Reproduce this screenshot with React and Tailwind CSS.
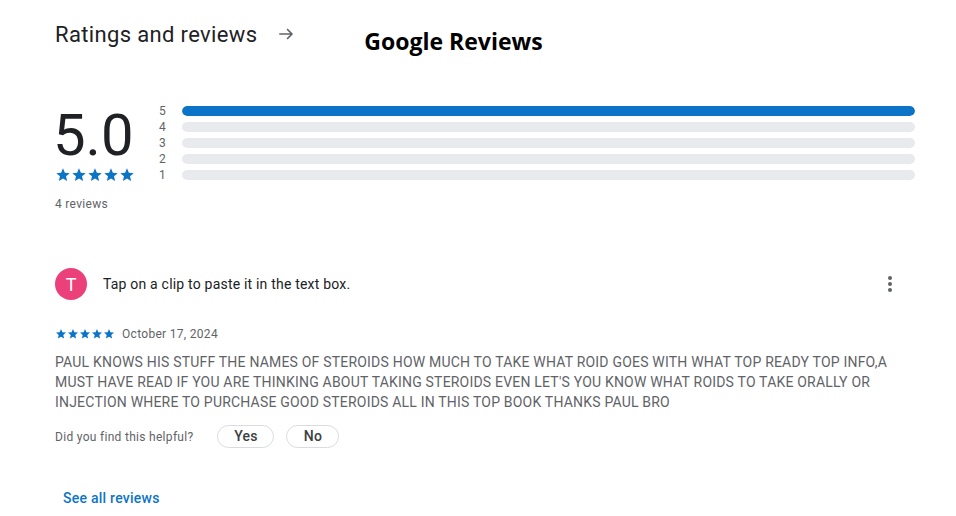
import React from "react";

const Star = ({ size = 14 }) => (
  <svg width={size} height={size} viewBox="0 0 24 24" fill="#0b74c7">
    <path d="M12 17.27L18.18 21l-1.64-7.03L22 9.24l-7.19-.61L12 2 9.19 8.63 2 9.24l5.46 4.73L5.82 21z" />
  </svg>
);

const Stars = ({ size, gap }) => (
  <div className={`flex ${gap}`}>
    {[0, 1, 2, 3, 4].map((i) => (
      <Star key={i} size={size} />
    ))}
  </div>
);

export default function App() {
  const rows = [5, 4, 3, 2, 1];
  return (
    <div className="w-[956px] h-[516px] bg-white overflow-hidden relative" style={{ fontFamily: "Roboto, sans-serif" }}>
      {/* header */}
      <div className="flex items-center pl-[55px] pt-[18px] h-[50px]">
        <span className="text-[22px] text-[#202124] tracking-[0.35px]">Ratings and reviews</span>
        <svg className="ml-[20px]" width="18" height="18" viewBox="0 0 24 24" fill="none" stroke="#5f6368" strokeWidth="2">
          <path d="M3 12h17M13.5 5.5l6.5 6.5-6.5 6.5" />
        </svg>
        <span className="ml-[69px] mt-[14px] text-[23px] font-bold text-black" style={{ fontFamily: "'Open Sans', sans-serif" }}>
          Google Reviews
        </span>
      </div>

      {/* summary */}
      <div className="flex pl-[55px] pr-[41px] mt-[53px]">
        <div className="w-[100px] flex flex-col">
          <div className="text-[58px] leading-[50px] text-[#202124] -ml-[2px] mt-[7px]">5.0</div>
          <div className="mt-[7px] ml-0">
            <Stars size={16} gap="gap-0" />
          </div>
          <div className="mt-[12px] text-[12px] text-[#5f6368] tracking-[0.3px]">4 reviews</div>
        </div>
        <div className="flex-1 flex flex-col ml-[4px] gap-[6px] mt-[3px]">
          {rows.map((r) => (
            <div key={r} className="flex items-center h-[10px]">
              <span className="w-[23px] text-[12px] text-[#5f6368] leading-none">{r}</span>
              <div className="flex-1 h-[10px] rounded-full bg-[#e8eaed] overflow-hidden">
                {r === 5 && <div className="h-full w-full rounded-full bg-[#0b74c7]" />}
              </div>
            </div>
          ))}
        </div>
      </div>

      {/* review */}
      <div className="pl-[55px] pr-[41px] mt-[55px]">
        <div className="flex items-center">
          <div className="w-[32px] h-[32px] rounded-full bg-[#ec407a] flex items-center justify-center text-white text-[18px]">T</div>
          <span className="ml-[16px] text-[14px] text-[#202124] tracking-[0.2px]">Tap on a clip to paste it in the text box.</span>
          <div className="flex-1" />
          <div className="flex flex-col gap-[2px] mr-[23px]">
            <div className="w-[4px] h-[4px] rounded-full bg-[#5f6368]" />
            <div className="w-[4px] h-[4px] rounded-full bg-[#5f6368]" />
            <div className="w-[4px] h-[4px] rounded-full bg-[#5f6368]" />
          </div>
        </div>
        <div className="flex items-center mt-[25px]">
          <Stars size={12} gap="gap-0" />
          <span className="ml-[7px] text-[12px] text-[#5f6368] tracking-[0.3px]">October 17, 2024</span>
        </div>
        <p className="mt-[9px] text-[14px] leading-[20px] text-[#5f6368] tracking-[0.2px] w-[860px]">
          PAUL KNOWS HIS STUFF THE NAMES OF STEROIDS HOW MUCH TO TAKE WHAT ROID GOES WITH WHAT TOP READY TOP INFO,A MUST HAVE READ IF YOU ARE THINKING ABOUT TAKING STEROIDS EVEN LET'S YOU KNOW WHAT ROIDS TO TAKE ORALLY OR INJECTION WHERE TO PURCHASE GOOD STEROIDS ALL IN THIS TOP BOOK THANKS PAUL BRO
        </p>
        <div className="flex items-center mt-[13px]">
          <span className="text-[12px] text-[#5f6368] tracking-[0.3px]">Did you find this helpful?</span>
          <button className="ml-[24px] w-[57px] h-[23px] rounded-full border border-[#dadce0] text-[14px] text-[#3c4043] font-medium tracking-[0.2px]">Yes</button>
          <button className="ml-[12px] w-[53px] h-[23px] rounded-full border border-[#dadce0] text-[14px] text-[#3c4043] font-medium tracking-[0.2px]">No</button>
        </div>
        <div className="mt-[40px] ml-[8px] text-[14px] font-medium text-[#0b74c7] tracking-[0.25px]">See all reviews</div>
      </div>
    </div>
  );
}
